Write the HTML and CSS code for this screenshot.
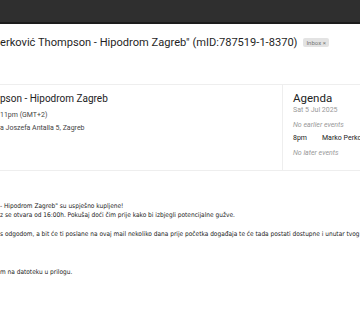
FILE: index.html
```html
<!DOCTYPE html>
<html lang="hr">

<head>
    <meta charset="UTF-8">
    <meta name="viewport" content="width=device-width, initial-scale=1.0">
    <title>Ulaznice - Hipodrom Zagreb</title>
    <link rel="stylesheet" href="styles.css">
</head>

<body>
    <div class="topbar"></div>

    <div class="subject">
        <h1>erković Thompson - Hipodrom Zagreb" (mID:787519-1-8370)</h1>
        <span class="label">Inbox <span class="x">×</span></span>
    </div>

    <div class="invite">
        <div class="event">
            <h2>pson - Hipodrom Zagreb</h2>
            <p>11pm (GMT+2)</p>
            <p>a Joszefa Antalla 5, Zagreb</p>
        </div>
        <div class="agenda">
            <h3>Agenda</h3>
            <div class="date">Sat 5 Jul 2025</div>
            <div class="none">No earlier events</div>
            <div class="item"><span class="time">8pm</span><span>Marko Perković Thompson</span></div>
            <div class="none">No later events</div>
        </div>
    </div>

    <div class="message">
        <p>- Hipodrom Zagreb" su uspješno kupljene!</p>
        <p>z se otvara od 16:00h. Pokušaj doći čim prije kako bi izbjegli potencijalne gužve.</p>
        <p class="gap"></p>
        <p>s odgodom, a bit će ti poslane na ovaj mail nekoliko dana prije početka događaja te će tada postati dostupne i unutar tvog profila.</p>
        <p class="gap"></p>
        <p class="gap"></p>
        <p class="gap"></p>
        <p>m na datoteku u prilogu.</p>
    </div>
</body>

</html>
```

FILE: styles.css
```css
body {
    margin: 0;
    width: 360px;
    height: 320px;
    overflow: hidden;
    background: #fff;
    font-family: Roboto, "Noto Sans", sans-serif;
    color: #222;
}

.topbar {
    height: 22px;
    background: #2f2f2f;
    border-bottom: 2px solid #1c1c1c;
}

.subject {
    display: flex;
    align-items: center;
    gap: 6px;
    margin-top: 10px;
    height: 16px;
    white-space: nowrap;
}

.subject h1 {
    margin: 0;
    font-size: 11.1px;
    font-weight: 400;
    color: #1f1f1f;
}

.label {
    background: #e3e3e3;
    color: #777;
    font-size: 6px;
    padding: 1px 3px;
    border-radius: 2px;
}

.label .x {
    font-size: 6px;
}

.invite {
    display: flex;
    margin-top: 34px;
    border-top: 1px solid #eeeeee;
    border-bottom: 1px solid #eeeeee;
    height: 85px;
    white-space: nowrap;
}

.event {
    flex: 1;
    padding-top: 8px;
}

.event h2 {
    margin: 0 0 5px;
    font-size: 10px;
    font-weight: 400;
    color: #222;
}

.event p {
    margin: 0;
    font-size: 7px;
    line-height: 13px;
    color: #444;
}

.agenda {
    width: 67px;
    border-left: 1px solid #eeeeee;
    padding-left: 10px;
    padding-top: 7px;
    overflow: hidden;
    font-size: 7px;
}

.agenda h3 {
    margin: 0;
    font-size: 11.5px;
    font-weight: 400;
    line-height: 13px;
}

.date {
    color: #999;
    line-height: 10px;
}

.none {
    margin-top: 5px;
    color: #999;
    font-style: italic;
    line-height: 10px;
}

.item {
    display: flex;
    margin-top: 3px;
    line-height: 10px;
    color: #222;
}

.time {
    width: 29px;
    flex: none;
}

.message {
    margin-top: 31px;
    font-family: "DejaVu Sans Condensed", "DejaVu Sans", sans-serif;
    font-size: 6.5px;
    color: #222;
    white-space: nowrap;
}

.message p {
    margin: 0;
    height: 9.4px;
    line-height: 9.4px;
}
```
